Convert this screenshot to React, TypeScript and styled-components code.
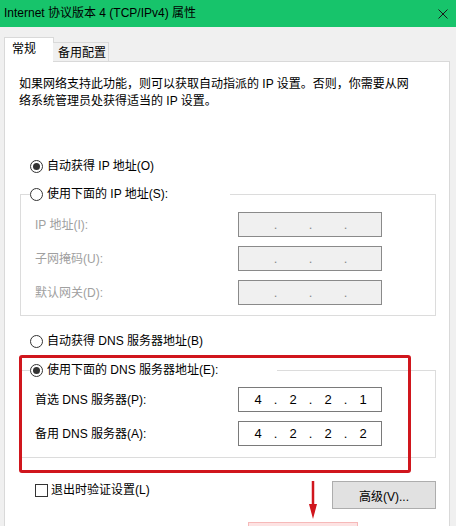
import * as React from "react";
import styled, { createGlobalStyle } from "styled-components";

const GlobalStyle = createGlobalStyle`
  html, body {
    margin: 0;
    padding: 0;
    background: #f0f0f0;
  }
  body {
    font-family: "Liberation Sans", "Noto Sans CJK SC", "Microsoft YaHei", sans-serif;
    font-size: 12px;
    color: #000;
  }
  * {
    box-sizing: border-box;
  }
`;

const Window = styled.div`
  width: 456px;
  height: 526px;
  overflow: hidden;
  display: flex;
  flex-direction: column;
  background: #f0f0f0;
`;

const TitleBar = styled.div`
  flex: none;
  height: 27px;
  background: #17c46b;
  display: flex;
  align-items: center;
  justify-content: space-between;
  padding: 0 8px 0 4px;
  line-height: 27px;
`;

const Body = styled.div`
  flex: 1;
  display: flex;
  flex-direction: column;
  padding: 10px 6px 0 4px;
`;

const TabStrip = styled.div`
  flex: none;
  height: 24px;
  display: flex;
  align-items: flex-end;
`;

const Tab = styled.div<{ $active?: boolean }>`
  position: relative;
  z-index: 1;
  border: 1px solid #d9d9d9;
  border-bottom: none;
  line-height: 1;
  display: flex;
  ${(p) =>
    p.$active
      ? `
    height: 25px;
    width: 50px;
    margin-bottom: -1px;
    background: #fff;
    padding: 5px 0 0 7px;
  `
      : `
    height: 19px;
    width: 56px;
    margin-left: -1px;
    background: #f0f0f0;
    border-left: none;
    padding: 4px 0 0 5px;
  `}
`;

const Panel = styled.div`
  flex: 1;
  position: relative;
  background: #fff;
  border: 1px solid #d9d9d9;
  border-bottom: none;
  padding: 14px 13px 0 15px;
  display: flex;
  flex-direction: column;
`;

const Intro = styled.p`
  margin: 0 0 0 -1px;
  line-height: 17px;
`;

const RadioRow = styled.div<{ $top: number }>`
  height: 20px;
  margin-top: ${(p) => p.$top}px;
  padding-left: 10px;
  display: flex;
  align-items: center;
  gap: 4px;
  line-height: 1;
`;

const Radio = styled.span<{ $checked?: boolean }>`
  position: relative;
  flex: none;
  width: 13px;
  height: 13px;
  border: 1px solid #333;
  border-radius: 50%;
  background: #fff;
  &::after {
    content: "";
    display: ${(p) => (p.$checked ? "block" : "none")};
    position: absolute;
    left: 2px;
    top: 2px;
    width: 7px;
    height: 7px;
    border-radius: 50%;
    background: #333;
  }
`;

const Group = styled.fieldset<{ $top: number; $bottom: number }>`
  margin: ${(p) => p.$top}px 0 0;
  padding: 0 0 ${(p) => p.$bottom}px 9px;
  border: 1px solid #dcdcdc;
  min-inline-size: 0;
`;

const Legend = styled.legend<{ $width: number }>`
  width: ${(p) => p.$width}px;
  height: 20px;
  padding: 0;
  display: flex;
  align-items: center;
  gap: 4px;
  line-height: 1;
`;

const Rows = styled.div<{ $top: number }>`
  padding-top: ${(p) => p.$top}px;
  display: flex;
  flex-direction: column;
  gap: 9px;
`;

const FieldRow = styled.div`
  height: 25px;
  padding-left: 5px;
  display: grid;
  grid-template-columns: 203px 144px;
  align-items: center;
`;

const FieldLabel = styled.span<{ $disabled?: boolean }>`
  color: ${(p) => (p.$disabled ? "#a0a0a0" : "#000")};
  line-height: 1;
`;

const IpBox = styled.div<{ $disabled?: boolean }>`
  height: 25px;
  border: 1px solid ${(p) => (p.$disabled ? "#8a8a8a" : "#7a7a7a")};
  background: ${(p) => (p.$disabled ? "#f0f0f0" : "#fff")};
  color: ${(p) => (p.$disabled ? "#8a8a8a" : "#000")};
  padding-left: 5px;
  display: flex;
  align-items: center;
  font-size: 13px;
  line-height: 1;
`;

const Octet = styled.span`
  width: 28px;
  text-align: center;
`;

const Dot = styled.span`
  width: 7px;
  text-align: center;
`;

const Footer = styled.div`
  margin-top: 23px;
  padding-left: 15px;
  display: flex;
  justify-content: space-between;
  align-items: flex-start;
`;

const CheckLabel = styled.label`
  margin-top: 1px;
  display: flex;
  align-items: center;
  gap: 3px;
  line-height: 16px;
`;

const CheckBox = styled.span`
  width: 13px;
  height: 13px;
  border: 1px solid #333;
  background: #fff;
`;

const Button = styled.button`
  width: 104px;
  height: 28px;
  background: #e1e1e1;
  border: 1px solid #adadad;
  font: inherit;
  color: #000;
  padding: 0;
`;

const Highlight = styled.div`
  position: absolute;
  left: 14px;
  top: 293px;
  width: 392px;
  height: 118px;
  border: 3px solid #d0161d;
  border-radius: 3px;
  pointer-events: none;
`;

const Arrow = styled.svg`
  position: absolute;
  left: 303px;
  top: 419px;
`;

const OkGlow = styled.div`
  position: absolute;
  left: 243px;
  top: 460px;
  width: 110px;
  height: 12px;
  background: #fde3e3;
  border: 1px solid #f6b9b9;
`;

const IpField = ({ value, disabled }: { value?: string[]; disabled?: boolean }) => {
  const parts = value ?? ["", "", "", ""];
  return (
    <IpBox $disabled={disabled}>
      {parts.map((part, i) => (
        <React.Fragment key={i}>
          {i > 0 && <Dot>.</Dot>}
          <Octet>{part}</Octet>
        </React.Fragment>
      ))}
    </IpBox>
  );
};

const CloseIcon = () => (
  <svg width="10" height="10" viewBox="0 0 10 10">
    <path d="M0.5 0.5 L9.5 9.5 M9.5 0.5 L0.5 9.5" stroke="#1a1a1a" strokeWidth="1" fill="none" />
  </svg>
);

export default function App() {
  return (
    <>
      <GlobalStyle />
      <Window>
        <TitleBar>
          <span>Internet 协议版本 4 (TCP/IPv4) 属性</span>
          <CloseIcon />
        </TitleBar>
        <Body>
          <TabStrip>
            <Tab $active>常规</Tab>
            <Tab>备用配置</Tab>
          </TabStrip>
          <Panel>
            <Intro>
              如果网络支持此功能，则可以获取自动指派的 IP 设置。否则，你需要从网
              <br />
              络系统管理员处获得适当的 IP 设置。
            </Intro>

            <RadioRow $top={46}>
              <Radio $checked />
              自动获得 IP 地址(O)
            </RadioRow>

            <Group $top={8} $bottom={10}>
              <Legend $width={200}>
                <Radio />
                使用下面的 IP 地址(S):
              </Legend>
              <Rows $top={8}>
                <FieldRow>
                  <FieldLabel $disabled>IP 地址(I):</FieldLabel>
                  <IpField disabled />
                </FieldRow>
                <FieldRow>
                  <FieldLabel $disabled>子网掩码(U):</FieldLabel>
                  <IpField disabled />
                </FieldRow>
                <FieldRow>
                  <FieldLabel $disabled>默认网关(D):</FieldLabel>
                  <IpField disabled />
                </FieldRow>
              </Rows>
            </Group>

            <RadioRow $top={15}>
              <Radio />
              自动获得 DNS 服务器地址(B)
            </RadioRow>

            <Group $top={9} $bottom={11}>
              <Legend $width={247}>
                <Radio $checked />
                使用下面的 DNS 服务器地址(E):
              </Legend>
              <Rows $top={7}>
                <FieldRow>
                  <FieldLabel>首选 DNS 服务器(P):</FieldLabel>
                  <IpField value={["4", "2", "2", "1"]} />
                </FieldRow>
                <FieldRow>
                  <FieldLabel>备用 DNS 服务器(A):</FieldLabel>
                  <IpField value={["4", "2", "2", "2"]} />
                </FieldRow>
              </Rows>
            </Group>

            <Footer>
              <CheckLabel>
                <CheckBox />
                退出时验证设置(L)
              </CheckLabel>
              <Button>高级(V)...</Button>
            </Footer>

            <Highlight />
            <Arrow width="10" height="40" viewBox="0 0 10 40">
              <path d="M5 0 L5 26" stroke="#d0161d" strokeWidth="2.5" />
              <path d="M1 23 L9 23 L5 38 Z" fill="#d0161d" />
            </Arrow>
            <OkGlow />
          </Panel>
        </Body>
      </Window>
    </>
  );
}
